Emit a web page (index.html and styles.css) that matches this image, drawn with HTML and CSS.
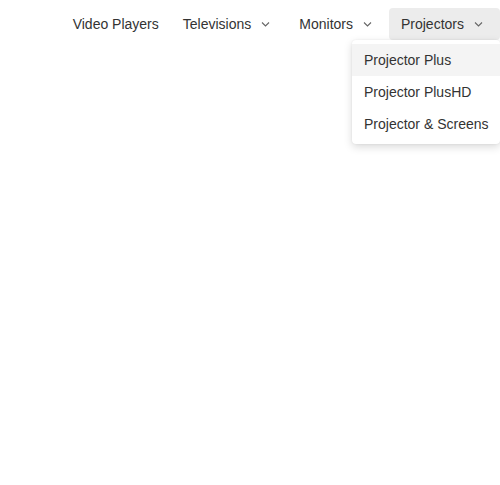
FILE: index.html
```html
<!DOCTYPE html>
<html>
<head>
<meta charset="utf-8">
<link rel="stylesheet" href="styles.css">
</head>
<body>
<nav class="nav">
  <div class="nav-item">Video Players</div>
  <div class="nav-item">Televisions
    <svg class="chev" width="16" height="16" viewBox="0 0 16 16"><path d="M3 6.5 L6.5 10 L10 6.5" fill="none" stroke="#666" stroke-width="1.1"/></svg>
  </div>
  <div class="nav-item">Monitors
    <svg class="chev" width="16" height="16" viewBox="0 0 16 16"><path d="M3 6.5 L6.5 10 L10 6.5" fill="none" stroke="#666" stroke-width="1.1"/></svg>
  </div>
  <div class="dropdown">
    <div class="nav-item active">Projectors
      <svg class="chev" width="16" height="16" viewBox="0 0 16 16"><path d="M3 6.5 L6.5 10 L10 6.5" fill="none" stroke="#666" stroke-width="1.1"/></svg>
    </div>
    <ul class="menu">
      <li class="menu-item hover">Projector Plus</li>
      <li class="menu-item">Projector PlusHD</li>
      <li class="menu-item">Projector &amp; Screens</li>
    </ul>
  </div>
</nav>
</body>
</html>
```
FILE: styles.css
```css
html, body {
  margin: 0;
  background: #fff;
}
body {
  min-height: 100vh;
  font-family: "Liberation Sans", Arial, sans-serif;
  font-size: 14px;
  color: #333;
}
.nav {
  display: flex;
  justify-content: flex-end;
  padding-top: 8px;
}
.nav-item {
  display: flex;
  align-items: center;
  height: 32px;
  padding: 0 12px;
  border-radius: 4px;
  white-space: nowrap;
}
.nav-item.active {
  background: #ececec;
}
.chev {
  margin-left: 8px;
  display: block;
}
.dropdown {
  position: relative;
}
.menu {
  position: absolute;
  z-index: 10;
  top: 32px;
  right: 0;
  width: 148px;
  margin: 0;
  padding: 4px 0;
  list-style: none;
  background: #fff;
  border-radius: 4px;
  box-shadow: 0 3px 8px rgba(0, 0, 0, 0.15), 0 0 2px rgba(0, 0, 0, 0.08);
}
.menu-item {
  height: 32px;
  line-height: 32px;
  padding: 0 12px;
  white-space: nowrap;
}
.menu-item.hover {
  background: #f4f4f4;
}
```
